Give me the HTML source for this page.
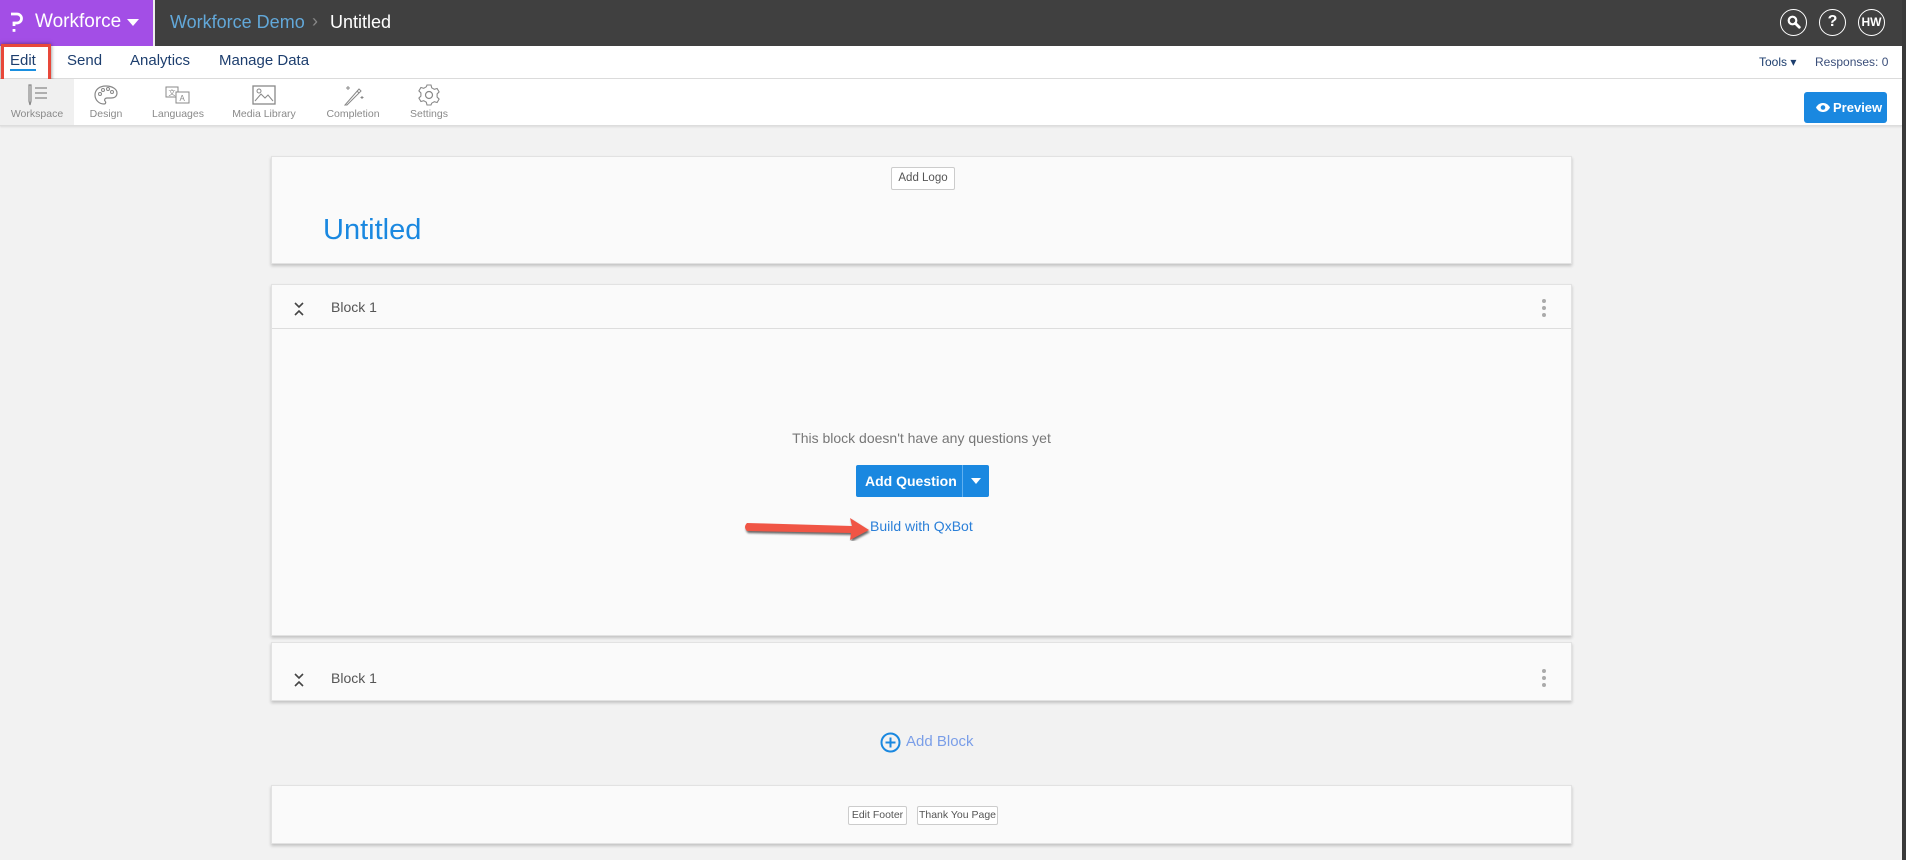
<!DOCTYPE html>
<html><head><meta charset="utf-8"><style>
*{box-sizing:border-box;margin:0;padding:0}
body{width:1906px;height:860px;overflow:hidden;background:#f2f2f2;font-family:"Liberation Sans",sans-serif;position:relative}
.abs{position:absolute}
.top{left:0;top:0;width:1906px;height:46px;background:#404040}
.brand{left:0;top:0;width:153px;height:46px;background:#a34ee6;color:#fff;font-size:19px}
.nav{left:0;top:46px;width:1902px;height:33px;background:#fff;border-bottom:1px solid #ddd}
.nav span{position:absolute;top:6px;font-size:15px;color:#1d3e6e;white-space:nowrap}
.tb{left:0;top:79px;width:1902px;height:47px;background:#fff;border-bottom:1px solid #ddd;box-shadow:0 1px 2px rgba(0,0,0,.1)}
.tab{position:absolute;top:0;height:46px;text-align:center;font-size:10.5px;color:#8a8a8a;white-space:nowrap}
.tab svg{display:block;margin:5px auto 2px}
.card{background:#fafafa;border:1px solid #e2e2e2;box-shadow:0 2px 3px rgba(0,0,0,.2)}
.btn{position:absolute;background:#fff;border:1px solid #ccc;border-radius:2px;font-size:11.5px;color:#555;text-align:center;line-height:20px;white-space:nowrap}
.circ{position:absolute;top:9px;width:27px;height:27px;border:1.5px solid #fff;border-radius:50%;color:#fff;font-weight:bold;text-align:center;line-height:24px;font-size:13px}
.dots{position:absolute;width:4px;height:18px}
.dots i{display:block;width:4px;height:4px;border-radius:50%;background:#aaa;margin-bottom:3px}
</style></head><body>
<div class="abs top"></div>
<div class="abs brand">
<svg class="abs" style="left:9px;top:12px" width="14" height="22" viewBox="0 0 14 22"><path d="M2 2h6a4.5 4.5 0 0 1 0 9H5v3" fill="none" stroke="#fff" stroke-width="2.8"/><rect x="3.6" y="17" width="2.8" height="2.8" fill="#fff"/></svg>
<span class="abs" style="left:35px;top:11px">Workforce</span>
<svg class="abs" style="left:127px;top:19px" width="12" height="8"><path d="M0 0h12L6 7z" fill="#fff"/></svg>
</div>
<div class="abs" style="left:153px;top:0;width:2px;height:46px;background:#eee"></div>
<div class="abs" style="left:170px;top:12px;font-size:18px;color:#62a8d9">Workforce Demo</div>
<div class="abs" style="left:312px;top:11px;font-size:18px;color:#888">›</div>
<div class="abs" style="left:330px;top:12px;font-size:18px;color:#fff">Untitled</div>
<div class="circ" style="left:1780px"><svg width="14" height="14" style="margin-top:5px" viewBox="0 0 14 14"><circle cx="5.5" cy="5.5" r="3.8" fill="none" stroke="#fff" stroke-width="2.2"/><path d="M8.3 8.3l4 4" stroke="#fff" stroke-width="2.8" stroke-linecap="round"/></svg></div>
<div class="circ" style="left:1819px;font-size:16px">?</div>
<div class="circ" style="left:1858px;font-size:12px">HW</div>
<div class="abs" style="left:1902px;top:0;width:4px;height:860px;background:#3a3a3a"></div>

<div class="abs nav">
<span style="left:10px;border-bottom:2px solid #1a8fe0;line-height:17px">Edit</span>
<span style="left:67px">Send</span>
<span style="left:130px">Analytics</span>
<span style="left:219px">Manage Data</span>
<span style="left:1759px;font-size:12px;top:9px">Tools ▾</span>
<span style="left:1815px;font-size:12px;top:9px;color:#3b4f7a">Responses: 0</span>
</div>
<div class="abs" style="left:1px;top:44px;width:50px;height:38px;border:3px solid #e8483a;box-shadow:0 0 4px rgba(0,0,0,.5)"></div>

<div class="abs tb">
<div class="tab" style="left:0;width:74px;background:#f0f0f0"><svg width="26" height="22" viewBox="0 0 26 22"><path d="M5 1v16l1 4 1-4V1zM11 4h12M11 9h12M11 14h12" fill="none" stroke="#888" stroke-width="1.2"/></svg>Workspace</div>
<div class="tab" style="left:80px;width:52px"><svg width="26" height="22" viewBox="0 0 26 22"><path d="M13 2C6 2 2 6 2 11s4 9 9 9c2 0 2-2 1-3s0-3 2-3h4c4 0 6-2 6-5 0-4-5-7-11-7z" fill="none" stroke="#888" stroke-width="1.2"/><circle cx="7" cy="10" r="1.5" fill="none" stroke="#888"/><circle cx="10" cy="6" r="1.5" fill="none" stroke="#888"/><circle cx="15" cy="5" r="1.5" fill="none" stroke="#888"/><circle cx="19" cy="8" r="1.5" fill="none" stroke="#888"/></svg>Design</div>
<div class="tab" style="left:148px;width:60px"><svg width="28" height="22" viewBox="0 0 28 22"><rect x="2" y="3" width="12" height="10" fill="none" stroke="#888"/><rect x="12" y="8" width="13" height="11" fill="#fff" stroke="#888"/><text x="4.5" y="11" font-size="7" fill="#888">文</text><text x="15.5" y="17" font-size="8" fill="#888">A</text></svg>Languages</div>
<div class="tab" style="left:228px;width:72px"><svg width="26" height="22" viewBox="0 0 26 22"><rect x="2" y="2" width="22" height="18" fill="none" stroke="#888" stroke-width="1.3"/><path d="M4 17l6-7 4 4 3-3 5 6" fill="none" stroke="#888"/><circle cx="8" cy="7" r="2" fill="none" stroke="#888"/></svg>Media Library</div>
<div class="tab" style="left:323px;width:60px"><svg width="26" height="22" viewBox="0 0 26 22"><path d="M5 21L19 5l2 2L7 21z" fill="none" stroke="#888"/><path d="M17 7l2 2M8 2v4M6 4h4M22 12v3M20.5 13.5h3" stroke="#888"/></svg>Completion</div>
<div class="tab" style="left:405px;width:48px"><svg width="26" height="22" viewBox="0 0 26 22"><circle cx="13" cy="11" r="3.5" fill="none" stroke="#888" stroke-width="1.2"/><path d="M11 1h4l.7 2.8 2.6 1.5 2.8-.8 2 3.4-2 2.1v3l2 2.1-2 3.4-2.8-.8-2.6 1.5L15 21h-4l-.7-2.8-2.6-1.5-2.8.8-2-3.4 2-2.1v-3l-2-2.1 2-3.4 2.8.8 2.6-1.5z" fill="none" stroke="#888" stroke-width="1.1"/></svg>Settings</div>
<div class="abs" style="left:1804px;top:13px;width:83px;height:31px;background:#1a88e0;border-radius:3px;color:#fff;font-size:13px;font-weight:bold;line-height:31px;padding-left:29px">Preview<svg class="abs" style="left:11px;top:10px" width="16" height="11" viewBox="0 0 16 11"><path d="M1 5.5C3 2 5.5 1 8 1s5 1 7 4.5C13 9 10.5 10 8 10S3 9 1 5.5z" fill="#fff"/><circle cx="8" cy="5.5" r="2.3" fill="#1a88e0"/></svg></div>
</div>

<div class="abs card" style="left:271px;top:156px;width:1301px;height:108px">
<div class="btn" style="left:619px;top:10px;width:64px;height:23px">Add Logo</div>
<div class="abs" style="left:51px;top:57px;font-size:29px;color:#1a88e0">Untitled</div>
</div>

<div class="abs card" style="left:271px;top:284px;width:1301px;height:352px">
<div class="abs" style="left:0;top:0;width:1299px;height:44px;border-bottom:1px solid #ddd"></div>
<svg class="abs" style="left:22px;top:17px" width="10" height="14" viewBox="0 0 10 14"><path d="M1 1l4 4 4-4M1 13l4-4 4 4" fill="none" stroke="#444" stroke-width="1.6"/></svg>
<div class="abs" style="left:59px;top:14px;font-size:14px;color:#555">Block 1</div>
<div class="dots" style="left:1270px;top:14px"><i></i><i></i><i></i></div>
<div class="abs" style="left:0;top:145px;width:1299px;text-align:center;font-size:14px;color:#777">This block doesn't have any questions yet</div>
<div class="abs" style="left:584px;top:180px;width:133px;height:32px;background:#1a88e0;border-radius:2px;color:#fff;font-size:14px;font-weight:bold;line-height:32px;padding-left:9px">Add Question</div>
<div class="abs" style="left:690px;top:180px;width:1px;height:32px;background:#60b0f0"></div>
<svg class="abs" style="left:699px;top:193px" width="10" height="6"><path d="M0 0h10L5 6z" fill="#fff"/></svg>
<div class="abs" style="left:598px;top:233px;font-size:14px;color:#2a7fd8">Build with QxBot</div>
<svg class="abs" style="left:470px;top:226px" width="130" height="30" viewBox="0 0 130 30"><path d="M5 12L110 15 108 7 127 19 108 29 109 22 5 20Q1 16 5 12z" fill="#f05545" style="filter:drop-shadow(1px 2px 1px rgba(0,0,0,.6))"/></svg>
</div>

<div class="abs card" style="left:271px;top:642px;width:1301px;height:59px">
<svg class="abs" style="left:22px;top:30px" width="10" height="14" viewBox="0 0 10 14"><path d="M1 1l4 4 4-4M1 13l4-4 4 4" fill="none" stroke="#444" stroke-width="1.6"/></svg>
<div class="abs" style="left:59px;top:27px;font-size:14px;color:#555">Block 1</div>
<div class="dots" style="left:1270px;top:26px"><i></i><i></i><i></i></div>
</div>

<svg class="abs" style="left:880px;top:732px" width="21" height="21" viewBox="0 0 21 21"><circle cx="10.5" cy="10.5" r="9" fill="none" stroke="#1a88e0" stroke-width="2"/><path d="M10.5 5.5v10M5.5 10.5h10" stroke="#1a88e0" stroke-width="2"/></svg>
<div class="abs" style="left:906px;top:733px;font-size:15px;color:#7a9ee8">Add Block</div>

<div class="abs card" style="left:271px;top:785px;width:1301px;height:59px">
<div class="btn" style="left:576px;top:20px;width:59px;height:19px;line-height:17px;font-size:10.5px">Edit Footer</div>
<div class="btn" style="left:645px;top:20px;width:81px;height:19px;line-height:17px;font-size:10.5px">Thank You Page</div>
</div>
</body></html>
